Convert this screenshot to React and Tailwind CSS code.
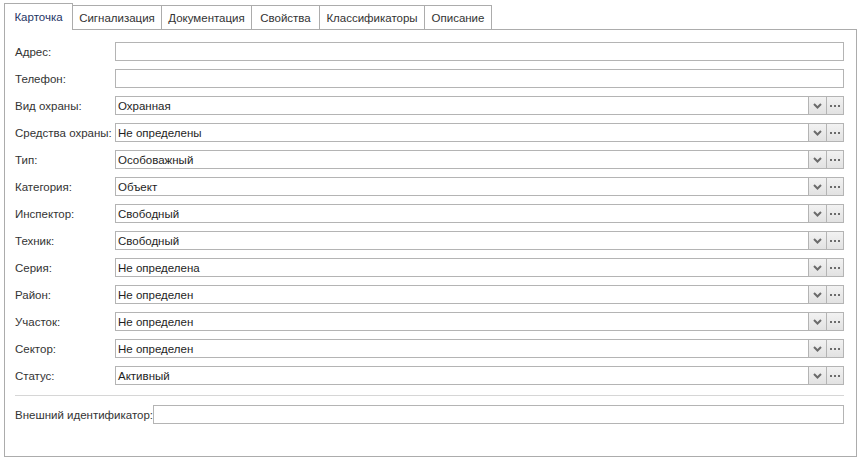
import React from 'react';

const tabs = [
  { name: 'Карточка', w: 'w-[69px]' },
  { name: 'Сигнализация', w: 'w-[89px]' },
  { name: 'Документация', w: 'w-[90px]' },
  { name: 'Свойства', w: 'w-[68px]' },
  { name: 'Классификаторы', w: 'w-[105px]' },
  { name: 'Описание', w: 'w-[67px]' },
];

const fields = [
  { label: 'Адрес:', value: '', combo: false },
  { label: 'Телефон:', value: '', combo: false },
  { label: 'Вид охраны:', value: 'Охранная', combo: true },
  { label: 'Средства охраны:', value: 'Не определены', combo: true },
  { label: 'Тип:', value: 'Особоважный', combo: true },
  { label: 'Категория:', value: 'Объект', combo: true },
  { label: 'Инспектор:', value: 'Свободный', combo: true },
  { label: 'Техник:', value: 'Свободный', combo: true },
  { label: 'Серия:', value: 'Не определена', combo: true },
  { label: 'Район:', value: 'Не определен', combo: true },
  { label: 'Участок:', value: 'Не определен', combo: true },
  { label: 'Сектор:', value: 'Не определен', combo: true },
  { label: 'Статус:', value: 'Активный', combo: true },
];

const ChevronIcon = () => (
  <svg width="9" height="6" viewBox="0 0 9 6">
    <path d="M1 1 L4.5 4.5 L8 1" fill="none" stroke="#6b6b6b" strokeWidth="2" />
  </svg>
);

const DotsIcon = () => (
  <svg width="10" height="2" viewBox="0 0 10 2">
    <rect x="0" y="0" width="2" height="2" fill="#6b6b6b" />
    <rect x="4" y="0" width="2" height="2" fill="#6b6b6b" />
    <rect x="8" y="0" width="2" height="2" fill="#6b6b6b" />
  </svg>
);

const Field = ({ value, combo }) => (
  <div className="flex flex-1 h-[19px]">
    <div className="flex-1 border border-[#b4b4b4] bg-white flex items-center pl-[2px] pt-[2px] text-[#1e1e1e] whitespace-nowrap">
      {value}
    </div>
    {combo && (
      <>
        <div className="w-[18px] border border-l-0 border-[#b4b4b4] bg-gradient-to-b from-[#f2f2f2] to-[#e2e2e2] flex items-center justify-center">
          <ChevronIcon />
        </div>
        <div className="w-[17px] border border-l-0 border-[#b4b4b4] bg-gradient-to-b from-[#f2f2f2] to-[#e2e2e2] flex items-center justify-center">
          <DotsIcon />
        </div>
      </>
    )}
  </div>
);

export default function App() {
  return (
    <div
      className="w-[861px] h-[459px] bg-white pt-[3px] px-[4px] text-[11.5px] leading-none text-[#333]"
      style={{ fontFamily: '"Liberation Sans", Arial, sans-serif' }}
    >
      <div className="flex items-end h-[27px] border-b border-[#acacac]">
        {tabs.map((t, i) =>
          i === 0 ? (
            <div
              key={t.name}
              className={`${t.w} h-[27px] -mb-px bg-white border border-b-0 border-[#acacac] flex items-center justify-center pt-[2px] text-[#1f3565] whitespace-nowrap`}
            >
              {t.name}
            </div>
          ) : (
            <div
              key={t.name}
              className={`${t.w} h-[24px] border border-b-0 border-l-0 border-[#acacac] bg-white flex items-center justify-center pt-[2px] whitespace-nowrap`}
            >
              {t.name}
            </div>
          )
        )}
      </div>

      <div className="h-[427px] border border-t-0 border-[#acacac] pt-[12px] pl-[10px] pr-[12px]">
        <div className="flex flex-col gap-[8px]">
          {fields.map((f) => (
            <div key={f.label} className="flex items-center">
              <div className="w-[100px] shrink-0 pt-[2px] whitespace-nowrap">{f.label}</div>
              <Field value={f.value} combo={f.combo} />
            </div>
          ))}
        </div>
        <div className="mt-[10px] h-px bg-[#d6d6d6]" />
        <div className="flex items-center mt-[9px]">
          <div className="w-[138px] shrink-0 pt-[2px] whitespace-nowrap">Внешний идентификатор:</div>
          <Field value="" combo={false} />
        </div>
      </div>
    </div>
  );
}
